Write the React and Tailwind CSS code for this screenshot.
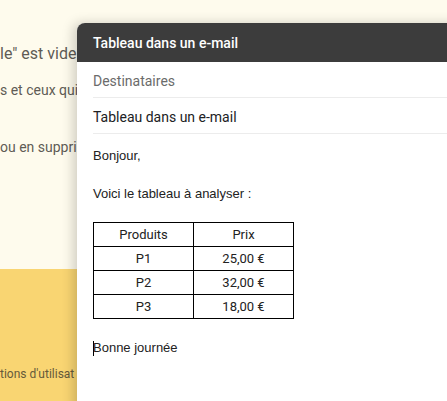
const rows = [
  ['P1', '25,00 €'],
  ['P2', '32,00 €'],
  ['P3', '18,00 €'],
];

export default function App() {
  return (
    <div className="relative h-[401px] w-[447px] overflow-hidden font-['Roboto',sans-serif]">
      {/* Page behind the compose window */}
      <div className="flex h-full flex-col">
        <div className="h-[269px] bg-[#fefbed] text-[#5f5b55]">
          <p className="pt-[44px] text-[16px] leading-5 whitespace-nowrap">le" est vide</p>
          <p className="pt-[16px] text-[14px] leading-5 whitespace-nowrap">s et ceux qui</p>
          <p className="pt-[37px] text-[14px] leading-5 whitespace-nowrap">ou en suppri</p>
        </div>
        <div className="flex-1 bg-[#f9d572] text-[#665a3a]">
          <p className="pt-[97px] text-[12px] leading-4 whitespace-nowrap">tions d'utilisat</p>
        </div>
      </div>

      {/* Compose window */}
      <div className="absolute top-[23px] left-[77px] right-[-20px] bottom-[-10px] flex flex-col overflow-hidden rounded-tl-lg bg-white shadow-[-4px_0_12px_rgba(0,0,0,0.18)]">
        <div className="flex h-[39px] items-center bg-[#3c3c3c] px-4 pt-[2px] text-[14px] font-medium text-white">
          Tableau dans un e-mail
        </div>
        <div className="mx-4 flex h-[36px] items-center border-b border-[#ececec] pt-[4px] text-[14px] text-[#6b6b6b]">
          Destinataires
        </div>
        <div className="mx-4 flex h-[36px] items-center border-b border-[#ececec] pt-[3px] text-[14px] text-[#202124]">
          Tableau dans un e-mail
        </div>
        <div className="px-4 pt-[14px] font-['Liberation_Sans',Arial,sans-serif] text-[13px] leading-4 text-[#222]">
          <p>Bonjour,</p>
          <p className="mt-[22px]">Voici le tableau à analyser :</p>
          <table className="mt-[20px] border-collapse font-['Roboto',sans-serif] text-[13px] text-[#222]">
            <tbody>
              <tr className="h-[24px]">
                <td className="w-[100px] border border-black text-center">Produits</td>
                <td className="w-[100px] border border-black text-center">Prix</td>
              </tr>
              {rows.map(([p, prix]) => (
                <tr key={p} className="h-[24px]">
                  <td className="border border-black text-center">{p}</td>
                  <td className="border border-black text-center">{prix}</td>
                </tr>
              ))}
            </tbody>
          </table>
          <p className="mt-[21px] flex items-center">
            <span className="inline-block h-[15px] w-px bg-black" />
            <span className="-ml-px">Bonne journée</span>
          </p>
        </div>
      </div>
    </div>
  );
}
